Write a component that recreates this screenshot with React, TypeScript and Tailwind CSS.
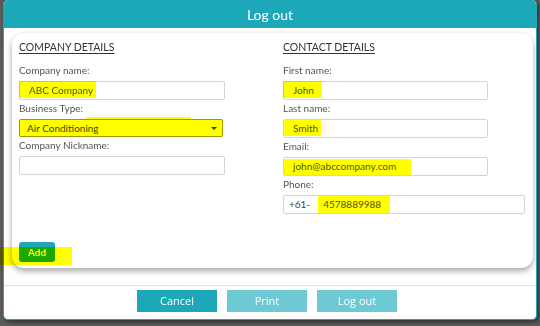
import type { ReactNode } from 'react';

const font = { fontFamily: 'Lato, "Open Sans", sans-serif' };

function Mark({ className }: { className: string }) {
  // yellow highlighter stroke painted over the screenshot
  return <span className={`pointer-events-none absolute bg-[#ffff00] mix-blend-multiply ${className}`} />;
}

function Field({
  label,
  width,
  pad = 'px-[9px]',
  children,
}: {
  label: string;
  width: string;
  pad?: string;
  children?: ReactNode;
}) {
  return (
    <div className="flex flex-col">
      <label className="mb-[4px] block h-[14px] text-[10px] leading-[14px] text-[#555]">{label}</label>
      <div
        className={`relative flex h-[19px] items-center rounded-[2px] border border-[#d4d4d4] bg-white text-[10px] text-[#555] ${pad} ${width}`}
      >
        {children}
      </div>
    </div>
  );
}

function Heading({ children }: { children: ReactNode }) {
  return (
    <h3 className="mb-[8px] h-[14px] text-[10.5px] leading-[14px] text-[#333] underline underline-offset-[2px]">
      {children}
    </h3>
  );
}

export default function App() {
  return (
    <div className="relative h-[326px] w-[540px] overflow-hidden bg-[#5b5b5b] pl-[3px]" style={font}>
      <div className="flex h-[320px] w-[534px] flex-col overflow-hidden rounded-[5px] border-x border-b border-[#1ca8b8] bg-white shadow-[2px_2px_4px_rgba(0,0,0,0.5)]">
        <div className="flex h-[28px] shrink-0 items-center justify-center bg-[#1ca8b8] text-[14px] text-white">
          Log out
        </div>

        <div className="ml-[8px] mr-[3px] mt-[5px] flex h-[235px] flex-col rounded-[12px] bg-white pl-[7px] pt-[7px] shadow-[0_3px_6px_rgba(0,0,0,0.35)]">
          <div className="grid grid-cols-[264px_1fr]">
            <div className="flex flex-col gap-[1px]">
              <Heading>COMPANY DETAILS</Heading>
              <Field label="Company name:" width="w-[206px]">
                <span>ABC Company</span>
                <Mark className="-left-px -top-px h-[17px] w-[77px]" />
              </Field>
              <div className="flex flex-col">
                <label className="mb-[4px] block h-[14px] text-[10px] leading-[14px] text-[#555]">Business Type:</label>
                <div className="relative flex h-[18px] w-[204px] items-center justify-between rounded-[2px] border border-[#9a9a9a] bg-white pl-[7px] pr-[5px] text-[10px] text-[#444]">
                  <span>Air Conditioning</span>
                  <span className="h-0 w-0 border-x-[3px] border-t-[3px] border-x-transparent border-t-[#444]" />
                  <Mark className="-left-px -top-px h-[18px] w-[204px]" />
                  <Mark className="left-[66px] -top-[3px] h-[3px] w-[105px]" />
                </div>
              </div>
              <Field label="Company Nickname:" width="w-[206px]" />
            </div>

            <div className="flex flex-col gap-[1px]">
              <Heading>CONTACT DETAILS</Heading>
              <Field label="First name:" width="w-[205px]">
                <span>John</span>
                <Mark className="-left-px -top-px h-[17px] w-[39px]" />
              </Field>
              <Field label="Last name:" width="w-[205px]">
                <span>Smith</span>
                <Mark className="left-0 top-0 h-[16px] w-[37px]" />
              </Field>
              <Field label="Email:" width="w-[205px]">
                <span>john@abccompany.com</span>
                <Mark className="left-0 top-[1px] h-[16px] w-[127px]" />
              </Field>
              <Field label="Phone:" width="w-[242px]" pad="px-[5px]">
                <span className="mr-[13px] text-[#444]">+61-</span>
                <span>4578889988</span>
                <Mark className="left-[34px] top-0 h-[17px] w-[72px]" />
              </Field>
            </div>
          </div>

          <button className="mt-auto mb-[6px] flex h-[20px] w-[36px] items-center justify-center rounded-[3px] bg-[#1ca8b8] text-[10px] font-bold text-white">
            Add
          </button>
        </div>

        <div className="mt-[17px] flex justify-center gap-[10px] border-t border-[#e2e2e2] pt-[4px] pr-[6px]" style={{ fontFamily: '"Open Sans", sans-serif' }}>
          <button className="h-[22px] w-[80px] bg-[#1ca8b8] text-[11px] text-white">Cancel</button>
          <button className="h-[22px] w-[80px] bg-[#6dc9d3] text-[11px] text-white">Print</button>
          <button className="h-[22px] w-[80px] bg-[#6dc9d3] text-[11px] text-white">Log out</button>
        </div>
      </div>

      <Mark className="left-0 top-[247px] h-[18px] w-[72px]" />
    </div>
  );
}
